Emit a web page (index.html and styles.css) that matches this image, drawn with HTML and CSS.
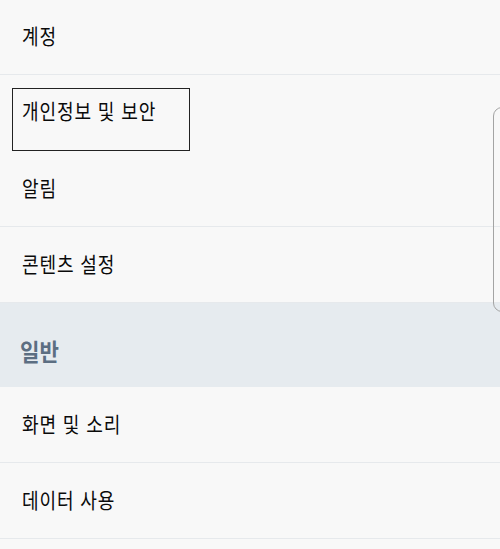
FILE: index.html
```html
<!DOCTYPE html>
<html lang="ko">
<head>
  <meta charset="UTF-8" />
  <meta name="viewport" content="width=device-width, initial-scale=1.0"/>
  <title>설정</title>
  <link rel="stylesheet" href="styles.css">
</head>
<body>

  <div class="settings">
    <div class="row"><span class="label">계정</span></div>
    <div class="row row-focus">
      <div class="focus-box"><span class="label">개인정보 및 보안</span></div>
    </div>
    <div class="row"><span class="label">알림</span></div>
    <div class="row"><span class="label">콘텐츠 설정</span></div>

    <div class="section"><span class="section-title">일반</span></div>

    <div class="row"><span class="label">화면 및 소리</span></div>
    <div class="row"><span class="label">데이터 사용</span></div>
  </div>

  <div class="scroll-tab"></div>

</body>
</html>
```

FILE: styles.css
```css
body {
  margin: 0;
  background: #f8f8f8;
  font-family: "Noto Sans CJK KR", "Noto Sans", sans-serif;
  color: #0a0a0a;
  overflow: hidden;
}
.settings {
  display: flex;
  flex-direction: column;
  margin-top: -1px;
}
.row {
  height: 75px;
  border-bottom: 1px solid #e6e9ec;
  display: flex;
  align-items: center;
  padding-left: 22px;
}
.row > .label {
  margin-bottom: 3px;
}
.label {
  display: inline-block;
  font-size: 21px;
  letter-spacing: 1px;
  line-height: 1;
  white-space: nowrap;
  transform: scaleX(0.86);
  transform-origin: left center;
}
.row-focus {
  padding-left: 12px;
  align-items: flex-end;
  border-bottom: none;
  height: 76px;
}
.focus-box {
  width: 178px;
  height: 63px;
  border: 1px solid #222;
  padding: 11px 0 0 9px;
  box-sizing: border-box;
}
.section {
  height: 84px;
  background: #e6ebef;
  padding: 36px 0 0 20px;
  box-sizing: border-box;
}
.section-title {
  display: inline-block;
  color: #5c6e82;
  font-weight: bold;
  font-size: 24px;
  line-height: 1;
  transform: scaleX(0.88);
  transform-origin: left center;
}
.scroll-tab {
  position: absolute;
  left: 493px;
  top: 107px;
  width: 20px;
  height: 205px;
  border: 1px solid #a4a4a4;
  border-radius: 9px;
  box-sizing: border-box;
}
```
